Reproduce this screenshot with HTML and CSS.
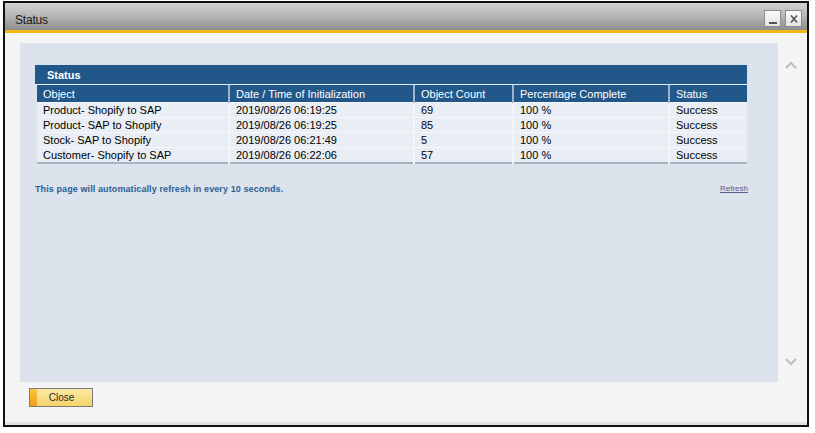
FILE: index.html
```html
<!DOCTYPE html>
<html>
<head>
<meta charset="utf-8">
<link rel="stylesheet" href="styles.css">
</head>
<body>
<div class="window">
  <div class="titlebar">
    <span class="title">Status</span>
    <div class="winbtns">
      <div class="winbtn"><svg width="12" height="12" viewBox="0 0 12 12"><rect x="2" y="9" width="8" height="2" fill="#555"/></svg></div>
      <div class="winbtn"><svg width="12" height="12" viewBox="0 0 12 12"><path d="M3 2.5 L9 9.5 M9 2.5 L3 9.5" stroke="#555" stroke-width="1.6"/></svg></div>
    </div>
  </div>
  <div class="accent"></div>
  <div class="content">
    <div class="main">
      <div class="panel">
        <div class="tbl">
          <div class="tbl-title">Status</div>
          <table>
            <colgroup>
              <col class="c1"><col class="c2"><col class="c3"><col class="c4"><col class="c5">
            </colgroup>
            <thead>
              <tr><th>Object</th><th>Date / Time of Initialization</th><th>Object Count</th><th>Percentage Complete</th><th>Status</th></tr>
            </thead>
            <tbody>
              <tr><td>Product- Shopify to SAP</td><td>2019/08/26 06:19:25</td><td>69</td><td>100 %</td><td>Success</td></tr>
              <tr><td>Product- SAP to Shopify</td><td>2019/08/26 06:19:25</td><td>85</td><td>100 %</td><td>Success</td></tr>
              <tr><td>Stock- SAP to Shopify</td><td>2019/08/26 06:21:49</td><td>5</td><td>100 %</td><td>Success</td></tr>
              <tr><td>Customer- Shopify to SAP</td><td>2019/08/26 06:22:06</td><td>57</td><td>100 %</td><td>Success</td></tr>
            </tbody>
          </table>
        </div>
        <div class="notice">
          <span class="msg">This page will automatically refresh in every 10 seconds.</span>
          <a class="refresh" href="#">Refresh</a>
        </div>
      </div>
      <div class="scroll">
        <svg width="12" height="8" viewBox="0 0 12 8"><path d="M1 7 L6 2 L11 7" fill="none" stroke="#b9bec6" stroke-width="2"/></svg>
        <svg width="12" height="8" viewBox="0 0 12 8"><path d="M1 1 L6 6 L11 1" fill="none" stroke="#b9bec6" stroke-width="2"/></svg>
      </div>
    </div>
    <div class="footer">
      <button class="close-btn"><span class="grip"></span><span class="label">Close</span></button>
    </div>
  </div>
</div>
</body>
</html>
```

FILE: styles.css
```css
* { box-sizing: border-box; }
html, body { margin: 0; padding: 0; background: #ffffff; }
body { padding: 1px 6px 6px 3px; font-family: "Liberation Sans", Arial, sans-serif; }

.window {
  width: 806px;
  height: 426px;
  border: 2px solid #111;
  display: flex;
  flex-direction: column;
  background: #f5f5f5;
}

.titlebar {
  height: 27px;
  flex: none;
  background: linear-gradient(#d3d3d3, #b0b0b0 55%, #8e8e8e);
  display: flex;
  align-items: center;
  justify-content: space-between;
  padding: 0 5px 0 10px;
}
.title { font-size: 12px; color: #1a1a1a; letter-spacing: -0.2px; margin-top: 6px; }
.winbtns { display: flex; gap: 4px; margin-top: 4px; }
.winbtn {
  width: 17px; height: 17px;
  border: 1px solid #8a8a8a;
  background: linear-gradient(#fbfbfb, #e4e4e4);
  display: flex; align-items: center; justify-content: center;
}

.accent { height: 3px; flex: none; background: #f4b610; }

.content {
  flex: 1;
  display: flex;
  flex-direction: column;
  padding: 10px 0 0 15px;
  border-bottom: 3px solid #e2e2e2;
}

.main { display: flex; height: 339px; }

.panel {
  width: 758px;
  background: #dce3ed;
  padding: 22px 31px 0 15px;
}

.tbl-title {
  height: 20px;
  background: #215889;
  color: #fff;
  font-weight: bold;
  font-size: 11px;
  line-height: 20px;
  padding-left: 12px;
  border-bottom: 1px solid #e9eef5;
}

table {
  width: 710px;
  margin-left: 2px;
  border-collapse: collapse;
  font-size: 11px;
  border-bottom: 2px solid #a9b3c1;
}
col.c1 { width: 192px; }
col.c2 { width: 185px; }
col.c3 { width: 99px; }
col.c4 { width: 156px; }
col.c5 { width: 78px; }

th {
  background: #215889;
  color: #fff;
  font-weight: normal;
  text-align: left;
  height: 17px;
  padding: 1px 0 0 6px;
  border-left: 2px solid #9fb2c8;
}
th:first-child { border-left: none; }

td {
  background: #e9eef5;
  color: #000;
  height: 14.4px;
  padding: 1px 0 0 6px;
  line-height: 13px;
  border-left: 2px solid #f3f5f9;
  border-top: 1px solid #f5f7fa;
}
td:first-child { border-left: none; }

.notice {
  display: flex;
  justify-content: space-between;
  align-items: center;
  margin-top: 20px;
}
.msg { color: #2b5f94; font-weight: bold; font-size: 9px; letter-spacing: 0.1px; }
.refresh { color: #5b5b8f; font-size: 8px; text-decoration: underline; margin-right: -1px; }

.scroll {
  width: 20px;
  display: flex;
  flex-direction: column;
  justify-content: space-between;
  align-items: center;
  padding: 18px 0 16px 6px;
}

.footer { padding: 6px 0 0 9px; }
.close-btn {
  width: 64px; height: 19px;
  border: 1px solid #7b7b7b;
  padding: 0;
  display: flex;
  background: linear-gradient(#fbe9a6, #f5d36a);
  font-family: "Liberation Sans", Arial, sans-serif;
}
.grip { width: 7px; height: 100%; background: linear-gradient(#f8c93a, #ee9c1a); }
.label { flex: 1; font-size: 10px; color: #2b2b2b; line-height: 17px; text-align: center; padding-right: 6px; }
```
